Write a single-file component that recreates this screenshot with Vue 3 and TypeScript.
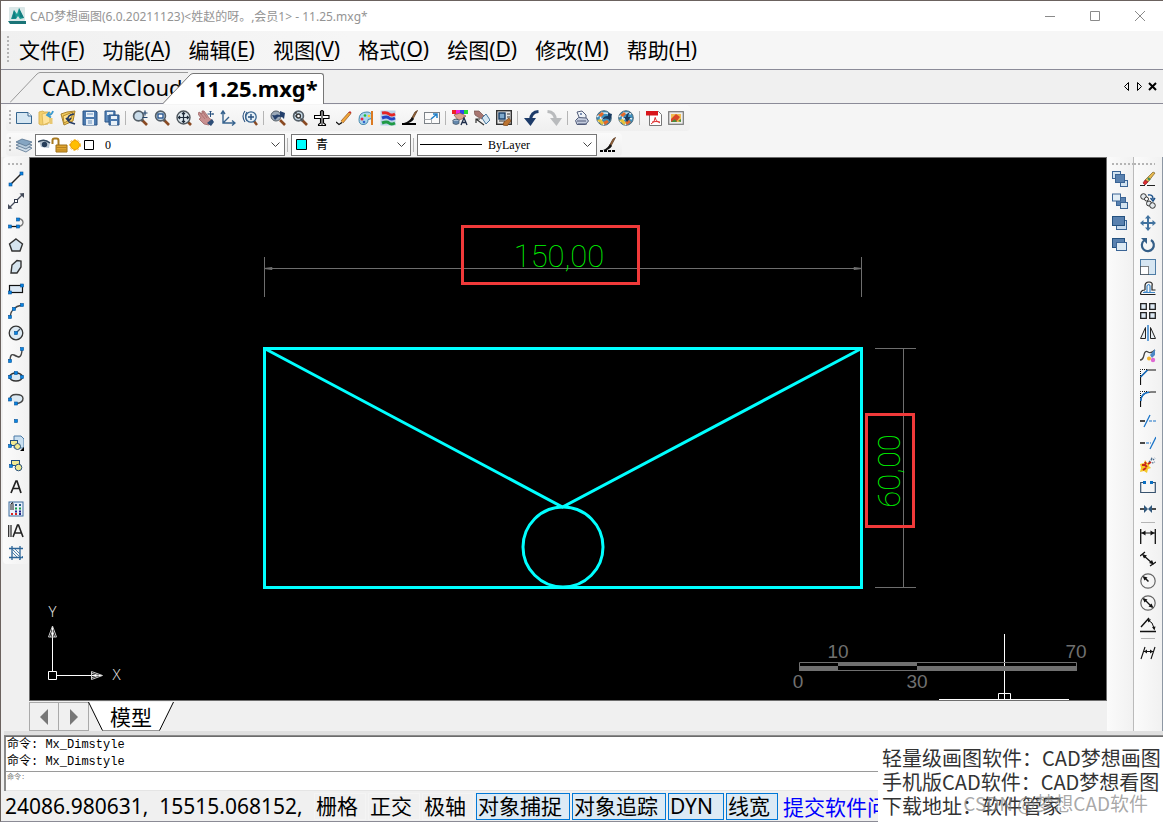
<script setup lang="ts">
import { ref } from 'vue'

interface MenuEntry { label: string; key: string }
interface Tool { id: string; name: string }
interface Toggle { label: string; on: boolean; latin?: boolean }

const menus: MenuEntry[] = [
  { label: '文件', key: 'F' },
  { label: '功能', key: 'A' },
  { label: '编辑', key: 'E' },
  { label: '视图', key: 'V' },
  { label: '格式', key: 'O' },
  { label: '绘图', key: 'D' },
  { label: '修改', key: 'M' },
  { label: '帮助', key: 'H' },
]

const lens = '<path d="M9.5 9.5L15 15" stroke="#8a4a22" stroke-width="2.6"/><path d="M9.5 9.5L11 11" stroke="#555" stroke-width="2.6"/><circle cx="6.5" cy="6" r="4.9" fill="#c9dcea" stroke="#555f68" stroke-width="1.7"/>'
const node = (x: number, y: number): string =>
  `<rect x="${x - 1.5}" y="${y - 1.5}" width="3" height="3" fill="#0a84e0" stroke="#04529a" stroke-width=".6"/>`
const square = (x: number, y: number, s: number, fill: string): string =>
  `<rect x="${x}" y="${y}" width="${s}" height="${s - 1}" fill="${fill}" stroke="#3a6495"/>`
const globe = '<circle cx="8" cy="8" r="7.300" fill="#3c8fbd" stroke="#4f6a7a"/><path d="M1 7q6-6 12-3M2 12q6-6 12-3M6 2q-4 7 2 13" stroke="#e4edf2" stroke-width="1.500" fill="none"/><path d="M2 5l4-3 2 2-3 3zM7 12l4-2 2 2-4 3z" fill="#e46a2a"/><path d="M1 10l4-1 3 4-2 2z" fill="#e8c23a"/>'

const icons: Record<string, string> = {
  new: '<path d="M.5 2.500h11.500l3.500 3.500v7.500h-15z" fill="#d5e6f2" stroke="#35658f"/><path d="M12 2.500V6h3.500" fill="#fff" stroke="#35658f"/>',
  open: '<path d="M1 2l4-1 1 1h4v12l-7 1-2-1z" fill="#f3cf6b" stroke="#d9b55b"/><path d="M4 4l8-2v10l-7 3z" fill="#ffe39a" stroke="#e0bb5b"/><path d="M15 1q-1 4-5 4M11.500 2L9 5l4 2.500" fill="none" stroke="#3b9ad0" stroke-width="1.800"/><path d="M13 8v6" stroke="#e8c873" stroke-width="3"/>',
  recent: '<path d="M1 4l6-2 8-1-2 10-9 4z" fill="#f0c95c" stroke="#a8802c"/><path d="M3 6l10-4-2 7-7 4z" fill="#ffe08a" stroke="#b48a2b"/><path d="M14 4q-7 1-6 6M6 8l2.500 3L11 8M9 12l6 2" fill="none" stroke="#263b63" stroke-width="1.700"/>',
  save: '<path d="M1 1h13l1 1v13H1z" fill="#4b79ae" stroke="#2b5486"/><rect x="4" y="2" width="8" height="5" fill="#e9f1f8"/><rect x="4" y="9" width="8" height="6" fill="#e4edf6"/><path d="M5 4h6M6 11h4M6 13h4" stroke="#6b91bd"/>',
  saveAll: '<path d="M1 1h10v11H1z" fill="#5b89bd" stroke="#2b5486"/><path d="M3 2h6v3H3z" fill="#e9f1f8"/><path d="M5 5h10v10H5z" fill="#4b79ae" stroke="#2b5486"/><path d="M7 6h6v3H7zM7 11h6v4H7z" fill="#e9f1f8"/>',
  zoomRt: lens + '<path d="M10.500 3h5M13 .5v5M10.500 7.500h5" stroke="#24476f" stroke-width="1.200"/>',
  zoomWin: lens + '<rect x="4" y="4" width="5" height="4" fill="#fff" stroke="#1f4e8a" stroke-width="1.300"/>',
  zoomExt: '<path d="M11 11l4 4" stroke="#8a4a22" stroke-width="2.600"/><circle cx="7.500" cy="7.500" r="6.500" fill="#dce6ec" stroke="#4d555b" stroke-width="1.400"/><path d="M7.500 2.500v10M2.500 7.500h10M6 4l1.500-1.500L9 4M6 11l1.500 1.500L9 11M4 6L2.500 7.500 4 9M11 6l1.500 1.500L11 9" stroke="#1d2a38" fill="none" stroke-width="1.200"/>',
  pan: '<path d="M0 4l1-2 3 2 0-3 2 0 3 4 2 3 4 3-4 4-5-1-5-5 2-1z" fill="#c99090" stroke="#9c6464" stroke-width=".8"/><path d="M2 3l5 6M5 2l4 6" stroke="#9c6464" stroke-width=".7"/><path d="M9 13l5-4 2 3-3 4z" fill="#2e4e77"/><path d="M12.500 1v6M9.500 4h6M11.500 2l1-1 1 1M14.500 3l1 1-1 1" stroke="#27507f" fill="none"/>',
  axes: '<path d="M3 1v12h12M1 4l2-3 2 3M12 10.500l3 2.500-3 2.500M3 13l6-6" stroke="#38648f" stroke-width="1.400" fill="none"/>',
  zoomPrev: '<path d="M3 1Q-1 6 3 12M5 2Q2 6 5 11" stroke="#27507f" fill="none" stroke-width="1.100"/><path d="M12 11l3 4" stroke="#8a4a22" stroke-width="2.400"/><circle cx="9" cy="7" r="5.200" fill="#e8f2f8" stroke="#38648f" stroke-width="1.300"/><path d="M9 4v6M6 7h6" stroke="#27507f" stroke-width="1.400"/>',
  back: '<path d="M10 10l5 5" stroke="#8a4a22" stroke-width="2.600"/><circle cx="6" cy="6" r="5" fill="#9ba9b8" stroke="#555f68"/><path d="M4 8q1-5 6-3V1l5 2-1 6-2-2q-5-1-8 1z" fill="#24406c"/><path d="M2 5l3 5 4-4z" fill="#24406c"/>',
  zoomObj: lens + '<circle cx="6.500" cy="6" r="2" fill="#fff" stroke="#333" stroke-width="1.300"/><path d="M4 2v2M9 8v2M3 6h1" stroke="#222"/>',
  plane: '<path d="M6.500 1.500q1.500-2 3 0V5.500h5.500v3H9.500V13l2 1.500v1h-7v-1l2-1.500V8.500H.5v-3h6z" fill="#fff" stroke="#000" stroke-width="1.100"/><path d="M8 1v14" stroke="#000"/>',
  pencil: '<path d="M5 11L13 2l2 1.500L7 13z" fill="#f0a63a" stroke="#91521c" stroke-width=".7"/><path d="M12.500 2.500L14 1l1.500 1.500-1 1z" fill="#c53030"/><path d="M5 11l2 2-3 1z" fill="#edd1a3"/><path d="M0 12l3 2.500 3-2" stroke="#111" fill="none" stroke-width="1.300"/>',
  palette: '<path d="M1 9.500Q1 2 9 2q5 0 5 4.500 0 3-4 3 0 5-5 5-4 0-4-5z" fill="#a9d6ec" stroke="#4789ad"/><circle cx="4" cy="9" r="1.500" fill="#e24"/><circle cx="7" cy="5.500" r="1.300" fill="#2b3"/><circle cx="11" cy="6" r="1.300" fill="#fc3"/><circle cx="6" cy="12" r="1.300" fill="#36c"/><path d="M14 1v14" stroke="#db7a22" stroke-width="2"/>',
  linesets: '<rect x=".5" y=".5" width="15" height="15" fill="#bcd3ea"/><path d="M2 3q5-1 7 1t6 0" stroke="#e42424" stroke-width="3" fill="none"/><path d="M2 8q5-2 7 0t6 0" stroke="#2443c4" stroke-width="3" fill="none"/><path d="M2 13q5-2 7 0t6 0" stroke="#1f9a45" stroke-width="3" fill="none"/>',
  brush: '<path d="M13 2L15.500.5 11 9 8 11z" fill="#a06a3a" stroke="#4e2d14" stroke-width=".7"/><path d="M10 7l2 2q-3 5-10 4 6-2 8-6z" fill="#111"/><path d="M0 14h14" stroke="#000" stroke-width="2"/>',
  resize: '<rect x=".5" y="2.500" width="15" height="11" fill="#fafafa" stroke="#7b8187"/><path d="M.5 9.500h7v4" fill="#fff" stroke="#a5a9ad"/><path d="M7 9l6-5M9 4h4v4" stroke="#1e7fc8" fill="none" stroke-width="1.500"/>',
  colorText: '<path d="M0 0h4v4H0z" fill="#e22"/><path d="M4 0h4v4H4z" fill="#e2d"/><path d="M8 0h4v4H8z" fill="#34e"/><path d="M12 0h4v4h-4z" fill="#2d3"/><path d="M2 5l6-2 6 3-4 3-4 1z" fill="#dca38e" stroke="#8c5248" stroke-width=".7"/><ellipse cx="4" cy="10.500" rx="3" ry="1.300" fill="#e8eef4" stroke="#456"/><path d="M1 10.500v3q3 2 6 0v-3" fill="#6488ad" stroke="#456" stroke-width=".7"/><path d="M9 15l3-7 3 7M10 12.500h4" stroke="#1c2c49" stroke-width="1.300" fill="none"/>',
  handPage: '<path d="M0 1l5 0 5 5-2 3-4-2-3-2z" fill="#a97772" stroke="#70504e" stroke-width=".7"/><path d="M8 8l4-4 4 6-4 4z" fill="#d5e7f3" stroke="#48779e"/><path d="M2 9l8 6M2 13V9h4" stroke="#333" fill="none" stroke-width="1.200"/>',
  styleDoc: '<rect x=".7" y=".7" width="14.600" height="13.600" fill="#e6e6e6" stroke="#333" stroke-width="1.400"/><rect x="3" y="3" width="6" height="6" fill="#7fa9cc" stroke="#173d66" stroke-width="1.400"/><path d="M11 4h3M11 7h3M3 11h6" stroke="#333"/><path d="M8 12l5-4 2 3-4 5-4-1z" fill="#bb7330" stroke="#6f3f17" stroke-width=".7"/>',
  undo: '<path d="M14.500 1.500Q7 2 6.500 10" stroke="#1d3b69" stroke-width="3" fill="none"/><path d="M0 8h12l-5.500 8z" fill="#1d3b69"/>',
  redo: '<path d="M1.500 1.500Q9 2 9.500 10" stroke="#b9bbbd" stroke-width="3" fill="none"/><path d="M4 8h12l-5.500 8z" fill="#b9bbbd"/>',
  print: '<path d="M5 7l-2-5 5-1 4 4v3" fill="#eef3f8" stroke="#505b78"/><path d="M1.500 10.500l3-3 8 .5 2 3-3 3.500H3z" fill="#c3cbdd" stroke="#505b78"/><path d="M3 11h9M4 14h9" stroke="#505b78" stroke-width="1.200"/><circle cx="7" cy="4" r="1" fill="#58709c"/>',
  globeOut: globe + '<path d="M6 10q1-4 6-4V3l4 1-2 7-2-2q-4-1-6 1z" fill="#18395f"/>',
  globeIn: globe + '<path d="M15 2q-5 0-5 5h3l-4 5-3-5h2q0-5 7-5z" fill="#18395f"/>',
  pdf: '<path d="M3.500 1.500h9l3 3v11h-12z" fill="#fff" stroke="#777"/><path d="M0 1h12v4.500H0z" fill="#d8151b"/><path d="M9 7q0 4 5 6M9 8q0 4-4 6M6 12q4-1 8 0" stroke="#df3030" fill="none"/>',
  image: '<rect x=".7" y="1.700" width="14.600" height="12.600" fill="#eee" stroke="#777" stroke-width="1.200"/><path d="M3 4h10v8H3z" fill="#f2bd50"/><path d="M3 9l5-5 4 3-4 5H3z" fill="#d84728"/><path d="M3 12l4-3 2 3zM10 11l3-2v3z" fill="#4b8c3d"/>',
  layers: '<path d="M0 11l6-3 10 3-6 4z" fill="#cfdde9" stroke="#58748f" stroke-width=".8"/><path d="M0 8l6-3 10 3-6 4z" fill="#b7cbdc" stroke="#58748f" stroke-width=".8"/><path d="M0 5l6-3 10 3-6 4z" fill="#85a5c2" stroke="#58748f" stroke-width=".8"/>',
  brushDots: '<path d="M13 2L15.500.5 11 9 8 11z" fill="#a06a3a" stroke="#4e2d14" stroke-width=".7"/><path d="M10 7l2 2q-3 5-9 4 5-2 7-6z" fill="#111"/><path d="M0 14h16" stroke="#000" stroke-width="2" stroke-dasharray="3 1"/>',
  line: '<path d="M2.500 13.500l11-11" stroke="#222" stroke-width="1.500"/>' + node(2.5, 13.5) + node(13.5, 2.5),
  xline: '<path d="M2 14L14 2" stroke="#444b5a" stroke-width="1.200"/><path d="M0 16v-5l4.500 4.500zM16 0v5L11.500.5z" fill="#444b5a"/><rect x="6.500" y="6.500" width="3" height="3" fill="#fff" stroke="#333b4c"/>',
  pline: '<path d="M2 11.500h9q4-1 4-4t-4-4" stroke="#777" fill="none" stroke-width="1.300"/><path d="M2 11.500h8" stroke="#111"/>' + node(2, 11.5) + node(10, 11.5) + node(10, 4.5),
  polygon: '<path d="M8 2l6.500 5-2.500 7H4L1.500 7z" fill="#d6e4ee" stroke="#333" stroke-width="1.400"/>',
  polyAny: '<path d="M4 6l5-4.500 4 .5 0 6-4 6H3z" fill="#d6e4ee" stroke="#333" stroke-width="1.400"/>',
  rect: '<rect x="1.500" y="4.500" width="13" height="7" fill="#dce9f5" stroke="#111" stroke-width="1.200"/>' + node(2, 11.5) + node(14, 4.5),
  arc: '<path d="M2 14Q3 4 14 2" stroke="#444" fill="none" stroke-width="1.400"/>' + node(2, 14) + node(6, 6) + node(14, 2),
  circle: '<circle cx="8" cy="8" r="6.800" fill="#dce9f2" stroke="#333" stroke-width="1.300"/><path d="M8 8l4-4" stroke="#456" stroke-width="1.200"/>' + node(8, 8),
  spline: '<path d="M2 14q0-8 4-6t5 2q3-1 3-8" stroke="#444" fill="none" stroke-width="1.400"/>' + node(2, 14) + node(14, 2),
  ellipse: '<ellipse cx="8" cy="8" rx="6.500" ry="4" fill="#dce9f2" stroke="#333" stroke-width="1.300"/>' + node(2, 8) + node(14, 8) + node(8, 4),
  ellArc: '<path d="M2 8.500q0-5 6-5 7 0 7 4t-6 5" fill="#dce9f2" stroke="#444" stroke-width="1.400"/>' + node(2, 8.5) + node(8, 12.5),
  point: node(8, 8),
  blockMake: '<path d="M6 1h7l3 3v9H6z" fill="#c9dff0" stroke="#4c7ba6"/><rect x="2.500" y="5.500" width="7" height="5" fill="#f2ea91" stroke="#244f7d"/><circle cx="9.500" cy="11.500" r="3" fill="#f2ea91" stroke="#244f7d"/><path d="M16 12v4h-4z" fill="#000"/>' + node(2, 11),
  blockIns: '<rect x="3.500" y="3.500" width="8" height="5" fill="#f2ea91" stroke="#244f7d"/><circle cx="10.500" cy="10.500" r="3.300" fill="#f2ea91" stroke="#244f7d"/>' + node(3, 9),
  text: '<path d="M3 14L8 2h1l4 12M5 9.500h7" stroke="#222" stroke-width="1.700" fill="none"/>',
  table: '<rect x="1" y="1" width="14" height="14" fill="#e9f1fa" stroke="#3c6d9e"/><path d="M7 4h2M11 4h2" stroke="#285b8b" stroke-width="2"/><path d="M7 7.500h2M11 7.500h2" stroke="#194" stroke-width="2"/><path d="M3 13h2M7 13h2" stroke="#d22" stroke-width="2"/><path d="M7 10.500h2M11 10.500h2M11 13h2" stroke="#228" stroke-width="2"/><path d="M3 9V3q2-3 2 0v6" fill="none" stroke="#222"/>',
  mtext: '<path d="M.7 2v12M3 2v12" stroke="#222" stroke-width="1.200"/><path d="M5 14L9.500 2h1L15 14M6.500 10h7" stroke="#222" stroke-width="1.600" fill="none"/>',
  hatch: '<path d="M4 1v14M12 1v14M1 3.500h14M1 12.500h14" stroke="#2d6597" stroke-width="1.300"/><path d="M4 7l5 5M4 4l8 8M7 4l5 5M15 11l-4 4" stroke="#3d76a6" stroke-width=".9"/>',
  orderFront: square(0.5, 0.5, 8, '#d3e3f0') + square(8.5, 9.5, 7, '#d3e3f0') + square(3.5, 3.5, 9, '#5981af'),
  orderBack: square(4.5, 4.5, 9, '#5981af') + square(0.5, 1, 8, '#e2edf5') + square(8.5, 9.5, 7, '#d3e3f0'),
  orderUp: square(4.5, 5.5, 10, '#c8dbed') + '<rect x=".5" y="1.500" width="12" height="9" fill="#5981af" stroke="#24517f"/>',
  orderDown: '<rect x=".5" y="1.500" width="12" height="9" fill="#5981af" stroke="#24517f"/><rect x="4.500" y="5.500" width="10" height="8" fill="#dce9f3" stroke="#3a6495"/>',
  erase: '<path d="M0 14.500h5M7 14.500h8" stroke="#222" stroke-width="1.200"/><path d="M5 9l8-8 2 1-7 9z" fill="#e7b84e" stroke="#796128" stroke-width=".7"/><path d="M5 9l3 2-3 3-2-2z" fill="#dd2c2c" stroke="#823" stroke-width=".7"/><path d="M8 7l2 2" stroke="#3e8c5a" stroke-width="2"/>',
  copy: '<circle cx="3.500" cy="3.500" r="2.800" fill="#e3e8ec" stroke="#333"/><circle cx="6.500" cy="6" r="2" fill="#fff" stroke="#333"/><circle cx="9" cy="10.500" r="2.500" fill="#e3e8ec" stroke="#333"/><circle cx="12.500" cy="12.500" r="2.800" fill="#e3e8ec" stroke="#333"/><path d="M8 2q5-1 5 4M10.500 5l2.500 3 2-3" stroke="#1a4f88" fill="none" stroke-width="1.400"/>',
  move: '<path d="M8 0l3 3.500H9V7h3.500V5L16 8l-3.500 3V9H9v3.500h2L8 16l-3-3.500h2V9H3.500v2L0 8l3.500-3v2H7V3.500H5z" fill="#41729f"/>',
  rotate: '<path d="M4 3.500A6 6 0 1 0 11 3" fill="none" stroke="#355f88" stroke-width="2.200"/><path d="M1 1h6v6z" fill="#355f88"/>',
  scale: '<rect x=".5" y=".5" width="15" height="15" fill="#d6e6f2" stroke="#4e7ca5"/><rect x=".5" y="7.500" width="8" height="8" fill="#fff" stroke="#111" stroke-dasharray="1 1"/>',
  offset: '<path d="M.5 13.500h15M5 9q-4.500 0-4.500 4.500M5 9V5q0-4 4-4t3 4v4h3.500" fill="none" stroke="#222" stroke-width="1.200"/><path d="M3 11.500h12M4 11h3V5q2-3 3 0v6" fill="none" stroke="#3d86c6" stroke-width="1.200"/>',
  array: '<path d="M.7.7h5.600v5.600H.7zM9.700.7h5.600v5.600H9.700zM.7 9.700h5.600v5.600H.7zM9.700 9.700h5.600v5.600H9.700z" fill="#dde9f3" stroke="#222" stroke-width="1.300"/>',
  mirror: '<path d="M5.500 2.500v11h-5zM10.500 2.500v11h5z" fill="#e8eef2" stroke="#222"/><path d="M8 0v16" stroke="#1973c8" stroke-width="1.300"/>',
  splineEdit: '<path d="M0 13q3 0 4-5t4-3 7-2" stroke="#444" fill="none" stroke-width="1.300"/><path d="M15 2v6l-3 3-2-3z" fill="#4c88c5"/><circle cx="9" cy="11.500" r="2" fill="#f0b42d"/><circle cx="13" cy="13" r="2.200" fill="#df69d3"/>',
  chamfer: '<path d="M.5 16V8l7-7H16" stroke="#111" fill="none" stroke-width="1.200"/><path d="M.5 8l7-7" stroke="#1973c8" stroke-width="1.500"/><path d="M.5 7V.5H7" stroke="#111" fill="none" stroke-dasharray="1 1"/>',
  fillet: '<path d="M.5 16v-5Q1 1 11 1h5" stroke="#111" fill="none" stroke-width="1.200"/><path d="M.7 10Q1 2 9 1.200" stroke="#1973c8" fill="none" stroke-width="1.600"/><path d="M.5 7V.5H7" stroke="#111" fill="none" stroke-dasharray="1 1"/>',
  trim: '<path d="M0 8h5" stroke="#111" stroke-width="1.500"/><path d="M4 14L10 2" stroke="#1973c8" stroke-width="1.300"/><path d="M9 8h7" stroke="#1973c8" stroke-width="1.200" stroke-dasharray="3 1"/>',
  extend: '<path d="M0 8h5" stroke="#111" stroke-width="1.500"/><path d="M6 8h5" stroke="#1973c8" stroke-width="1.200" stroke-dasharray="3 1"/><path d="M10 14l6-12" stroke="#1973c8" stroke-width="1.300"/>',
  explode: '<path d="M0 7l4-1 1-3 2 3 3-1-1 4 2 2-3 1-1 4-3-2-4 1 1-4z" fill="#f5c928"/><path d="M2 8l3 0 2 2M3 13l3-2M8 7l3-2M5 5l1 2" stroke="#c8261d" stroke-width="2"/><path d="M9 5l3-3M12 6l3-1M11 1l2 1M13 3l2-2" stroke="#456789" stroke-width="1.300" stroke-dasharray="1.500 1"/>',
  breakAt: '<path d="M4 3.500H.7v10h14.600v-10H12" stroke="#38536f" fill="none" stroke-width="1.200"/><path d="M3 2h3v3H3zM10 2h3v3h-3z" fill="#0a6fc2"/>',
  join: '<path d="M0 8h4M12 8h4" stroke="#111" stroke-width="1.600"/><path d="M4 4l4 4-4 4zM12 4L8 8l4 4z" fill="#31587c"/>',
  dimLin: '<path d="M.7 0v15M15.300 0v15" stroke="#111" stroke-width="1.300"/><path d="M1 4h14" stroke="#111"/><path d="M1.500 4l4-2.500v5zM14.500 4l-4-2.500v5z" fill="#111"/>',
  dimAli: '<path d="M0 5l5-4M10 15l6-4M3 4l9 8" stroke="#111" stroke-width="1.300"/><path d="M2 3l5 1.500-3 3zM14 13.500L9 12l3-3z" fill="#111"/>',
  dimRad: '<circle cx="8" cy="8" r="7.200" fill="none" stroke="#666" stroke-width="1.200"/><path d="M8.500 8.500L5 5" stroke="#111" stroke-width="1.500"/><path d="M2.500 3l5 1.500-3 3z" fill="#111"/>',
  dimDia: '<circle cx="8" cy="8" r="7.200" fill="none" stroke="#666" stroke-width="1.200"/><path d="M4 4l8 8" stroke="#111" stroke-width="1.200"/><path d="M2.500 3l5 1.500-3 3zM13.500 13l-5-1.500 3-3z" fill="#111"/>',
  dimAng: '<path d="M0 14.500h16M1 10l8-9" stroke="#111" stroke-width="1.400"/><path d="M8 3q5 2 6 8" stroke="#111" fill="none"/><path d="M7 2l4 .5-2.500 3zM14.500 13.500L12 10l3.500-.5z" fill="#111"/>',
  dimEdit: '<path d="M1 14L5 2M11 14l4-12M4 6.500h9" stroke="#111" fill="none" stroke-width="1.100"/><path d="M4 6.500l3-2v4zM13 6.500l-3-2v4z" fill="#111"/>',
}

const t = (id: string, name: string): Tool => ({ id, name })

const mainTools: Tool[][] = [
  [t('new', '新建'), t('open', '打开'), t('recent', '打开最近'), t('save', '保存'), t('saveAll', '另存为')],
  [t('zoomRt', '实时缩放'), t('zoomWin', '窗口缩放'), t('zoomExt', '范围缩放'), t('pan', '平移'), t('axes', '坐标系'), t('zoomPrev', '动态缩放')],
  [t('back', '上一视图'), t('zoomObj', '查找'), t('plane', '图块'), t('pencil', '草图'), t('palette', '调色板'), t('linesets', '线型'), t('brush', '画笔'), t('resize', '全屏')],
  [t('colorText', '文字颜色'), t('handPage', '特性匹配'), t('styleDoc', '样式')],
  [t('undo', '撤销'), t('redo', '重做')],
  [t('print', '打印'), t('globeOut', '发布'), t('globeIn', '下载')],
  [t('pdf', '输出PDF'), t('image', '输出图片')],
]
const drawTools: Tool[] = [
  t('line', '直线'), t('xline', '构造线'), t('pline', '多段线'), t('polygon', '正多边形'), t('polyAny', '多边形'), t('rect', '矩形'),
  t('arc', '圆弧'), t('circle', '圆'), t('spline', '样条曲线'), t('ellipse', '椭圆'), t('ellArc', '椭圆弧'), t('point', '点'),
  t('blockMake', '创建块'), t('blockIns', '插入块'), t('text', '单行文字'), t('table', '表格'), t('mtext', '多行文字'), t('hatch', '填充'),
]
const orderTools: Tool[] = [t('orderFront', '前置'), t('orderBack', '后置'), t('orderUp', '置于对象之上'), t('orderDown', '置于对象之下')]
const modifyTools: Tool[][] = [
  [
    t('erase', '删除'), t('copy', '复制'), t('move', '移动'), t('rotate', '旋转'), t('scale', '缩放'), t('offset', '偏移'), t('array', '阵列'), t('mirror', '镜像'),
    t('splineEdit', '编辑样条'), t('chamfer', '倒角'), t('fillet', '圆角'), t('trim', '修剪'), t('extend', '延伸'), t('explode', '分解'), t('breakAt', '打断'), t('join', '合并'),
  ],
  [t('dimLin', '线性标注'), t('dimAli', '对齐标注'), t('dimRad', '半径标注'), t('dimDia', '直径标注'), t('dimAng', '角度标注')],
  [t('dimEdit', '编辑标注')],
]

const toggles = ref<Toggle[]>([
  { label: '栅格', on: false },
  { label: '正交', on: false },
  { label: '极轴', on: false },
  { label: '对象捕捉', on: true },
  { label: '对象追踪', on: true },
  { label: 'DYN', on: true, latin: true },
  { label: '线宽', on: true },
])
const history: string[] = ['命令: Mx_Dimstyle', '命令: Mx_Dimstyle']
const command = ref('')
</script>

<template>
  <div class="app">
    <header class="titlebar">
      <svg class="logo" viewBox="0 0 18 18" aria-hidden="true">
        <rect x="1" y="0" width="16" height="14" rx="1" fill="#dbe8e8" />
        <path d="M0 14h18v3H2z" fill="#1a7477" />
        <path d="M3 12L6 3l3 4 2-6 5 10-4 1-2-3-2 3z" fill="#1b9c94" />
        <path d="M6 3l2 8-4 1zM11 1l1 9 4 1z" fill="#137c80" />
      </svg>
      <h1>CAD梦想画图(6.0.20211123)&lt;姓赵的呀。,会员1&gt; - 11.25.mxg*</h1>
      <div class="winbtns">
        <button aria-label="最小化"><svg viewBox="0 0 12 12"><path d="M1 6.500h10" /></svg></button>
        <button aria-label="最大化"><svg viewBox="0 0 12 12"><path d="M1.500 1.500h9v9h-9z" /></svg></button>
        <button aria-label="关闭"><svg viewBox="0 0 12 12"><path d="M1 1l10 10M11 1L1 11" /></svg></button>
      </div>
    </header>

    <nav class="menubar">
      <i class="grip"></i>
      <button v-for="m in menus" :key="m.key">{{ m.label }}(<u>{{ m.key }}</u>)</button>
    </nav>

    <div class="tabs">
      <button class="tab">
        <svg viewBox="0 0 30 31" aria-hidden="true"><path d="M0 30.500L27 2q2-1.500 3-1.500" /></svg>
        <span>CAD.MxCloud</span>
      </button>
      <button class="tab active">
        <svg viewBox="0 0 30 31" aria-hidden="true"><path d="M0 31L26 3q2-2.500 4-2.500V31z" fill="#fff" stroke="none" /><path d="M0 30.500L26 3q2-2.500 4-2.500" /></svg>
        <span>11.25.mxg*</span>
      </button>
      <div class="tabnav">
        <button aria-label="向左"><svg viewBox="0 0 9 9"><path d="M6.500.5v8l-4-4z" /></svg></button>
        <button aria-label="向右"><svg viewBox="0 0 9 9"><path d="M2.500.5v8l4-4z" /></svg></button>
        <button aria-label="关闭标签"><svg viewBox="0 0 9 9"><path d="M1 1l7 7M8 1L1 8" class="bold" /></svg></button>
      </div>
    </div>

    <div class="toolrow">
      <div class="panel">
        <i class="grip"></i>
        <div v-for="(group, g) in mainTools" :key="g" class="group">
          <button v-for="tool in group" :key="tool.id" class="tool" :aria-label="tool.name">
            <svg viewBox="0 0 16 16" fill="none" v-html="icons[tool.id]"></svg>
          </button>
        </div>
      </div>
    </div>

    <div class="toolrow props">
      <div class="panel">
        <i class="grip"></i>
        <button class="tool" aria-label="图层"><svg viewBox="0 0 16 16" v-html="icons.layers"></svg></button>
        <div class="combo layer">
          <svg class="layericons" viewBox="0 0 58 16" aria-hidden="true">
            <path d="M1 4q6-3 11 1l-1 6-8-1z" fill="#b8c6d2" />
            <path d="M0 5q6-4 12 1" fill="none" stroke="#33485d" stroke-width="1.500" />
            <circle cx="6.500" cy="7.500" r="2.700" fill="#263e5a" />
            <path d="M14.500 7V3.500q0-2 2-2h2q2 0 2 2V8" fill="none" stroke="#a87a20" stroke-width="2" />
            <path d="M18 8h11v7H18z" fill="#e0a530" stroke="#9c6e17" />
            <path d="M18 10.500h11M18 13h11" stroke="#b78321" />
            <circle cx="37" cy="8" r="5.500" fill="none" stroke="#f5b82b" stroke-width="1" stroke-dasharray="2 2" />
            <circle cx="37" cy="8" r="4.500" fill="#ffbe00" stroke="#ef9b00" />
            <path d="M46.500 3.500h9v9h-9z" fill="#fff" stroke="#000" />
          </svg>
          <select aria-label="图层名称"><option>0</option></select>
          <svg class="chev" viewBox="0 0 9 6"><path d="M.5.5l4 4 4-4" /></svg>
        </div>
        <i class="sep"></i>
        <div class="combo color">
          <svg class="swatch" viewBox="0 0 11 11" aria-hidden="true"><path d="M.5.5h10v10H.5z" fill="#0ff" stroke="#000" /></svg>
          <select aria-label="颜色"><option>青</option></select>
          <svg class="chev" viewBox="0 0 9 6"><path d="M.5.5l4 4 4-4" /></svg>
        </div>
        <i class="sep"></i>
        <div class="combo linetype">
          <i class="sample"></i>
          <select aria-label="线型"><option>ByLayer</option></select>
          <svg class="chev" viewBox="0 0 9 6"><path d="M.5.5l4 4 4-4" /></svg>
        </div>
        <button class="tool" aria-label="线宽设置"><svg viewBox="0 0 16 16" v-html="icons.brushDots"></svg></button>
      </div>
    </div>

    <main class="work">
      <aside class="side left">
        <i class="grip h"></i>
        <button v-for="tool in drawTools" :key="tool.id" class="tool" :aria-label="tool.name">
          <svg viewBox="0 0 16 16" fill="none" v-html="icons[tool.id]"></svg>
        </button>
      </aside>

      <section class="center">
        <div class="canvas">
          <svg viewBox="30 158 1076 542" aria-label="图纸">
            <g fill="none" stroke="#6e6e6e">
              <path d="M264.500 257v40M861.500 257v40M264 268.500h598M264 268.500l8-1v2zM862 268.500l-8-1v2z" />
              <path d="M875 348.500h41M875 587.500h41M903.500 348v240" />
            </g>
            <g fill="none" stroke="#0ff" stroke-width="3">
              <path d="M264.500 348.500h597v239h-597z" />
              <path d="M264.500 348.500L562.500 507l299-158.500" />
              <circle cx="563" cy="547" r="40" />
            </g>
            <g class="dim">
              <text x="559" y="267" text-anchor="middle">150,00</text>
              <text transform="translate(900 471) rotate(-90)" text-anchor="middle">60,00</text>
            </g>
            <g fill="none" stroke="#f03a3a" stroke-width="3">
              <path d="M462.500 226.500h176v57h-176zM866.500 414.500h47v112h-47z" />
            </g>
            <g fill="none" stroke="#fff">
              <path d="M48.500 671.500h8v8h-8zM52.500 671v-45M57 675.500h45" />
              <path d="M52.500 626l-4 11h8zM52.500 630l-2 7M52.500 630l2 7" stroke="#ccc" />
              <path d="M102.500 675.500l-11-4v8zM99 675.500l-7-2M99 675.500l-7 2" stroke="#ccc" />
              <path d="M1004.500 634v66M939 699.500h130M998.500 700v-6.500h12v6.500" />
            </g>
            <g class="ucs">
              <text x="52.500" y="617" text-anchor="middle">Y</text>
              <text x="116.500" y="680" text-anchor="middle">X</text>
            </g>
            <path d="M799.500 662.500h277v8h-277z" fill="none" stroke="#707070" />
            <path d="M838 662h79v4h-79zM799 666h39v5h-39zM917 666h160v5h-160z" fill="#707070" />
            <g class="scale">
              <text x="838" y="658" text-anchor="middle">10</text>
              <text x="1076" y="658" text-anchor="middle">70</text>
              <text x="798" y="688" text-anchor="middle">0</text>
              <text x="917" y="688" text-anchor="middle">30</text>
            </g>
          </svg>
        </div>
        <div class="layouts">
          <button class="arrow" aria-label="上一布局"><svg viewBox="0 0 10 16"><path d="M9 0v16L1 8z" /></svg></button>
          <button class="arrow" aria-label="下一布局"><svg viewBox="0 0 10 16"><path d="M1 0v16l8-8z" /></svg></button>
          <button class="model">
            <svg viewBox="0 0 86 29" aria-hidden="true"><path d="M.5 0l14 28.500h57L85.500 0z" fill="#fff" /><path d="M14.500 28.500h57" stroke="#999" /><path d="M.5 0l14 28.500M71.500 28.500L85.500 0" stroke="#000" /></svg>
            <span>模型</span>
          </button>
        </div>
      </section>

      <aside class="side order">
        <i class="grip h"></i>
        <button v-for="tool in orderTools" :key="tool.id" class="tool" :aria-label="tool.name">
          <svg viewBox="0 0 16 16" fill="none" v-html="icons[tool.id]"></svg>
        </button>
      </aside>
      <aside class="side modify">
        <i class="grip h"></i>
        <div v-for="(group, g) in modifyTools" :key="g" class="vgroup">
          <button v-for="tool in group" :key="tool.id" class="tool" :aria-label="tool.name">
            <svg viewBox="0 0 16 16" fill="none" v-html="icons[tool.id]"></svg>
          </button>
        </div>
      </aside>
    </main>

    <section class="console">
      <div class="log"><p v-for="(row, i) in history" :key="i">{{ row }}</p></div>
      <input v-model="command" aria-label="命令行" placeholder="命令:" />
    </section>

    <footer class="status">
      <output>24086.980631,&nbsp; 15515.068152,</output>
      <button v-for="s in toggles" :key="s.label" :class="{ on: s.on, latin: s.latin }" :aria-pressed="s.on" @click="s.on = !s.on">{{ s.label }}</button>
      <a href="#">提交软件问题</a>
    </footer>

    <div class="promo">
      <p>轻量级画图软件：CAD梦想画图</p>
      <p>手机版CAD软件：CAD梦想看图</p>
      <p>下载地址：软件管家</p>
      <span class="mark">CSDN @梦想CAD软件</span>
    </div>
  </div>
</template>

<style>
body { margin: 0; overflow: hidden; }
</style>

<style scoped>
.app {
  position: relative;
  box-sizing: border-box;
  min-height: 100vh;
  display: flex;
  flex-direction: column;
  background: #f0f0f0;
  border-top: 1px solid #6b625e;
  border-left: 1px solid #6b625e;
  border-bottom: 1px solid #8b8b95;
  font-family: "Noto Sans", "Noto Sans CJK SC", sans-serif;
  color: #000;
}
.app * { box-sizing: border-box; }
button {
  display: flex;
  align-items: center;
  justify-content: center;
  flex: none;
  padding: 0;
  border: 0;
  background: none;
  color: inherit;
  font: inherit;
  white-space: nowrap;
}
svg { display: block; flex: none; }
p, h1 { margin: 0; }

.titlebar { display: flex; align-items: center; height: 30px; padding: 0 1px 1px 7px; background: #fff; }
.logo { width: 18px; height: 18px; }
.titlebar h1 { flex: 1; margin-left: 4px; font-size: 12px; font-weight: 400; color: #949494; white-space: nowrap; }
.winbtns { display: flex; }
.winbtns button { width: 45px; height: 28px; }
.winbtns svg { width: 12px; height: 12px; fill: none; stroke: #8a8a8a; }

.grip {
  flex: none;
  width: 2px;
  height: 16px;
  background: repeating-linear-gradient(#b4b4b4 0 2px, transparent 2px 4px);
}
.grip.h { width: auto; height: 2px; background: repeating-linear-gradient(90deg, #b4b4b4 0 2px, transparent 2px 4px); }

.menubar {
  display: flex;
  align-items: center;
  gap: 18px;
  height: 39px;
  padding: 0 0 2px 6px;
  background: linear-gradient(90deg, #f0f0f0, #f6f6f6 30%);
  border-bottom: 1px solid #8b8b98;
  font-size: 21px;
}
.menubar .grip { height: 26px; margin-right: -8px; }
.menubar u { text-decoration-thickness: 1px; text-underline-offset: 3px; }

.tabs { display: flex; align-items: flex-end; height: 34px; padding-left: 9px; border-bottom: 1px solid #8b8b98; }
.tab { position: relative; height: 31px; font-size: 22px; }
.tab svg { width: 30px; height: 31px; fill: none; stroke: #999; }
.tab span { width: 148px; height: 31px; padding-left: 2px; overflow: hidden; border-top: 1px solid #999; text-align: left; line-height: 29px; }
.tab.active { margin: 0 0 -1px -25px; font-weight: 700; }
.tab.active svg { stroke: #777; }
.tab.active span { width: auto; padding: 0 5px 0 2px; background: #fff; border-top-color: #777; border-right: 1px solid #777; border-top-right-radius: 3px; }
.tabnav { display: flex; align-self: center; gap: 4px; margin-left: auto; padding-right: 6px; }
.tabnav svg { width: 9px; height: 9px; fill: none; stroke: #000; }
.tabnav .bold { stroke-width: 2; }

.toolrow { display: flex; height: 28px; padding: 1px 0 1px 5px; background: #f5f5f5; }
.panel { display: flex; align-items: center; padding: 0 3px; border-radius: 4px; background: linear-gradient(#fafafa, #efefef); }
.toolrow .grip { margin-right: 2px; }
.group { display: flex; }
.group + .group::before { content: ""; width: 1px; height: 14px; margin: 4px 3px 0 2px; background: #b5b5b5; }
.tool { width: 22px; height: 22px; }
.tool svg { width: 16px; height: 16px; }
.toolrow.props { height: 25px; }
.props .sep { width: 1px; height: 14px; margin: 0 3px 0 2px; background: #b5b5b5; }
.combo { display: flex; align-items: center; height: 22px; border: 1px solid #777; background: #fff; }
.combo select {
  flex: 1;
  min-width: 0;
  height: 20px;
  padding: 0;
  border: 0;
  appearance: none;
  background: none;
  font: 12px "Liberation Serif", "Noto Sans CJK SC", serif;
  color: #000;
}
.chev { width: 9px; height: 6px; margin-right: 4px; fill: none; stroke: #444; }
.layer { width: 250px; }
.layericons { width: 58px; height: 16px; margin: 0 9px 0 2px; }
.color { width: 120px; }
.swatch { width: 11px; height: 11px; margin: 0 9px 0 4px; }
.linetype { width: 180px; }
.sample { width: 62px; height: 1px; margin: 0 6px 0 2px; background: #000; }

.work { display: flex; flex: 1; min-height: 0; }
.side { display: flex; flex-direction: column; flex: none; align-items: center; padding-top: 6px; background: linear-gradient(90deg, #fbfbfb, #f1f1f1); }
.side .grip { align-self: stretch; margin: 0 7px 3px; }
.left { width: 26px; align-self: flex-start; margin: 0 0 8px 2px; border-radius: 4px; }
.left .grip { margin: 0 6px 3px 5px; }
.order { width: 26px; }
.order .grip, .modify .grip { margin: 0 0 3px 5px; }
.modify { width: 30px; border-left: 1px solid #bbb; border-right: 1px solid #8d97a3; }
.modify .grip { margin: 0 7px 3px 0; }
.vgroup + .vgroup::before { content: ""; display: block; width: 14px; height: 1px; margin: 2px auto 3px; background: #b5b5b5; }
.center { display: flex; flex: 1; flex-direction: column; min-width: 0; }
.canvas { flex: 1; min-height: 0; border: 1px solid #6d6d6d; background: #000; }
.canvas svg { width: 100%; height: 100%; }
.dim text { fill: #0f0; font: 100 31px Roboto, "Noto Sans", sans-serif; }
.ucs text { fill: #eee; font: 300 15px "Open Sans", "Noto Sans", sans-serif; }
.scale text { fill: #707070; font: 19px "Liberation Sans", sans-serif; }
.layouts { display: flex; flex: none; height: 30px; padding-top: 1px; }
.arrow { width: 30px; height: 29px; border: 1px solid #aaa; }
.arrow + .arrow { border-left: 0; }
.arrow svg { width: 10px; height: 16px; fill: #777; }
.model { position: relative; width: 86px; height: 29px; margin-left: -1px; font-size: 21px; line-height: 26px; }
.model svg { position: absolute; inset: 0; width: 86px; height: 29px; fill: none; }
.model span { position: relative; }

.console {
  flex: none;
  margin: 5px 0 0 3px;
  border-top: 1px solid #6b6b6b;
  border-left: 2px solid #8a8a8a;
  background: #fff;
  box-shadow: 0 -1px 0 #8a8a8a, 0 -5px 0 #e0e0e0;
  font-family: "Liberation Mono", "Noto Sans CJK SC", monospace;
}
.log { padding-left: 1px; border-bottom: 1px solid #9a9a9a; font-size: 12px; line-height: 17px; }
.log p { height: 17px; }
.console input {
  display: block;
  width: 100%;
  height: 19px;
  padding: 0 0 9px 1px;
  border: 0;
  border-bottom: 1px solid #e5e5e5;
  outline: 0;
  background: #fff;
  font: 7px "Liberation Mono", "Noto Sans CJK SC", monospace;
}
.console input::placeholder { color: #777; opacity: 1; }

.status { display: flex; flex: none; align-items: center; gap: 2px; height: 30px; margin-right: 285px; padding-left: 4px; overflow: hidden; font-size: 21px; }
.status output { flex: none; width: 307px; white-space: nowrap; }
.status button { height: 27px; padding: 0 7px 0 1px; border: 1px solid #f4f4f4; line-height: 24px; }
.status .on { border-color: #0078d7; background: #dceaf5; }
.status .latin { padding-right: 10px; }
.status a { flex: none; margin-left: 3px; color: #00f; text-decoration: none; white-space: nowrap; }

.promo {
  position: absolute;
  right: 0;
  bottom: -1px;
  width: 285px;
  height: 80px;
  padding: 4px 0 0 4px;
  overflow: hidden;
  background: #fff;
  color: #333;
  font: 20px/24px "Noto Sans CJK SC", sans-serif;
  white-space: nowrap;
}
.mark { position: absolute; right: 15px; bottom: 7px; color: rgba(130, 130, 130, 0.7); font-size: 19px; }
</style>
